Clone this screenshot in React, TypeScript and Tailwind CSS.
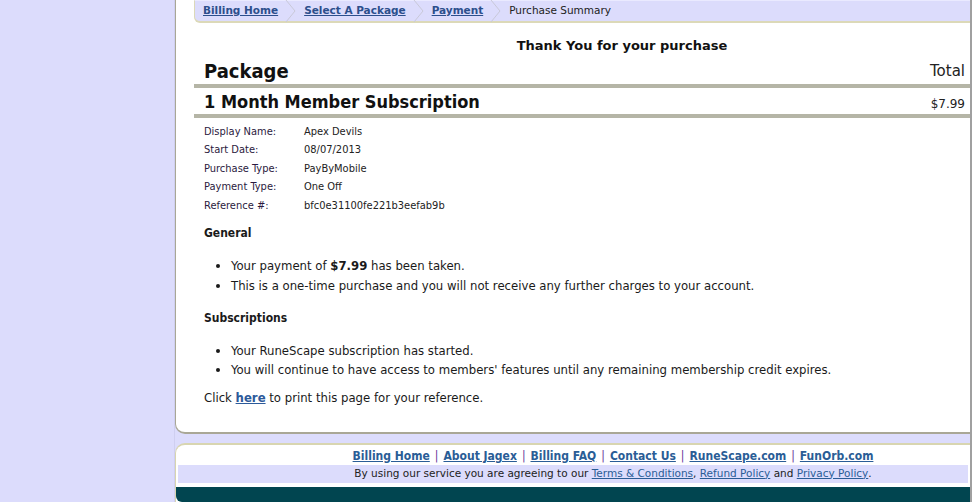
const crumbs = [
  { label: 'Billing Home', link: true },
  { label: 'Select A Package', link: true },
  { label: 'Payment', link: true },
  { label: 'Purchase Summary', link: false },
];

const details = [
  ['Display Name:', 'Apex Devils'],
  ['Start Date:', '08/07/2013'],
  ['Purchase Type:', 'PayByMobile'],
  ['Payment Type:', 'One Off'],
  ['Reference #:', 'bfc0e31100fe221b3eefab9b'],
];

const footerLinks = ['Billing Home', 'About Jagex', 'Billing FAQ', 'Contact Us', 'RuneScape.com', 'FunOrb.com'];

const Chevron = () => (
  <svg width="14" height="22" viewBox="0 0 14 22" className="mx-[6px] shrink-0">
    <path d="M2 0 L11 11 L2 22" fill="none" stroke="#c8c8d8" strokeWidth="1" />
  </svg>
);

export default function App() {
  return (
    <div className="flex min-h-[502px] w-[973px] bg-[#dcdcfc] font-['DejaVu_Sans',Verdana,sans-serif] text-[#1c1030]">
      <div className="w-[175px] shrink-0 border-r border-[#cfcff0]" />
      <div className="flex w-[795px] shrink-0 flex-col">
        <div className="rounded-bl-[10px] border-b-2 border-l border-[#a9a796] bg-white pb-[24px] pl-[18px]">
          <div className="flex h-[23px] items-center rounded-bl-[6px] border-b-2 border-l border-[#dcd9b8] border-t border-t-[#eaeaff] bg-[#dcdcfc] pl-[8px] text-[10.5px]">
            {crumbs.map((c, i) => (
              <div key={c.label} className="flex items-center">
                {c.link ? (
                  <a href="#" className="font-bold text-[#2c4f8c] underline">{c.label}</a>
                ) : (
                  <span className="text-[#222]">{c.label}</span>
                )}
                {i < crumbs.length - 1 ? <Chevron /> : null}
              </div>
            ))}
          </div>

          <div className="mt-[13px] pl-[80px] text-center text-[13px] font-bold text-[#111]">
            Thank You for your purchase
          </div>

          <div className="mt-[3px] flex items-end justify-between border-b-4 border-[#b5b5a6] pb-[1px] pl-[10px] pr-[5px]">
            <span className="font-['DejaVu_Sans_Condensed','DejaVu_Sans',sans-serif] text-[20px] leading-[24px] font-bold text-[#111]">Package</span>
            <span className="text-[15px] text-[#222]">Total</span>
          </div>
          <div className="flex items-end justify-between border-b-4 border-[#b5b5a6] pb-[1px] pl-[10px] pr-[5px] pt-[3px]">
            <span className="font-['DejaVu_Sans_Condensed','DejaVu_Sans',sans-serif] text-[18px] leading-[22px] font-bold text-[#111]">1 Month Member Subscription</span>
            <span className="text-[12px] text-[#222]">$7.99</span>
          </div>

          <div className="font-['DejaVu_Sans_Condensed','DejaVu_Sans',sans-serif]">
            <div className="mt-[5px] pl-[10px] text-[11px]">
              {details.map(([k, v]) => (
                <div key={k} className="flex h-[18.5px] items-center">
                  <span className="w-[100px] text-[#2b1a40]">{k}</span>
                  <span className="text-[#222]">{v}</span>
                </div>
              ))}
            </div>

            <div className="pl-[10px] text-[13px] text-[#1a1a1a]">
              <div className="mt-[9px] text-[12px] font-bold">General</div>
              <ul className="mt-[14px] list-disc pl-[27px]">
                <li className="h-[20px]">Your payment of <b>$7.99</b> has been taken.</li>
                <li className="h-[20px]">This is a one-time purchase and you will not receive any further charges to your account.</li>
              </ul>
              <div className="mt-[13px] text-[12px] font-bold">Subscriptions</div>
              <ul className="mt-[14px] list-disc pl-[27px]">
                <li className="h-[19px]">Your RuneScape subscription has started.</li>
                <li className="h-[19px]">You will continue to have access to members' features until any remaining membership credit expires.</li>
              </ul>
              <div className="mt-[9px]">
                Click <a href="#" className="font-bold text-[#2c5a9a] underline">here</a> to print this page for your reference.
              </div>
            </div>
          </div>
        </div>

        <div className="mt-[9px] flex flex-1 flex-col rounded-tl-[10px] border-l border-t-2 border-[#d8d5b0] bg-white">
          <div className="flex h-[20px] items-center justify-center pl-[80px] pt-[3px] font-['DejaVu_Sans_Condensed','DejaVu_Sans',sans-serif] text-[12px] font-bold">
            {footerLinks.map((l, i) => (
              <span key={l} className="flex items-center">
                <a href="#" className="text-[#2a5d96] underline">{l}</a>
                {i < footerLinks.length - 1 ? <span className="mx-[5px] font-normal text-[#663399]">|</span> : null}
              </span>
            ))}
          </div>
          <div className="mx-[2px] flex h-[18px] items-center justify-center bg-[#dcdcfc] pl-[80px] text-[10.5px] text-[#222]">
            By using our service you are agreeing to our&nbsp;
            <a href="#" className="text-[#2a5d96] underline">Terms &amp; Conditions</a>,&nbsp;
            <a href="#" className="text-[#2a5d96] underline">Refund Policy</a>&nbsp;and&nbsp;
            <a href="#" className="text-[#2a5d96] underline">Privacy Policy</a>.
          </div>
          <div className="mt-[4px] h-[15px] flex-1 rounded-bl-[6px] bg-[#014550]" />
        </div>
      </div>
      <div className="flex-1 border-l-2 border-[#a0a0a0] bg-white" />
    </div>
  );
}
